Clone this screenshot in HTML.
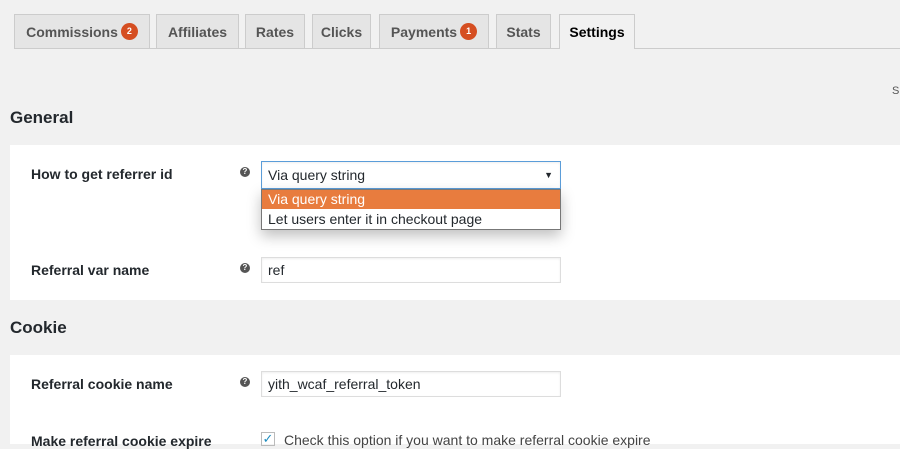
<!DOCTYPE html>
<html><head><style>
body{margin:0;width:900px;height:444px;overflow:hidden;background:#f1f1f1;font-family:"Liberation Sans",sans-serif;color:#23282d;position:relative}
.a{position:absolute}
.tab{position:absolute;top:14px;height:34px;background:#e5e5e5;border:1px solid #ccc;border-bottom:none;box-sizing:border-box;font-size:14px;font-weight:bold;color:#555;line-height:34px;text-align:center}
.badge{display:inline-block;width:17px;height:17px;border-radius:50%;background:#d54e21;color:#fff;font-size:9px;line-height:17px;vertical-align:middle;margin-left:3px;margin-top:-3px}
.panel{position:absolute;left:10px;width:890px;background:#fff}
.lbl{position:absolute;left:31px;font-size:14px;font-weight:bold;color:#23282d}
.h{position:absolute;left:10px;font-size:17px;font-weight:bold;color:#23282d}
.q{position:absolute;left:240px;width:10px;height:10px;border-radius:50%;background:#555;color:#fff;font-size:8px;font-weight:bold;line-height:10px;text-align:center}
.inp{position:absolute;left:261px;width:300px;height:26px;border:1px solid #ddd;box-sizing:border-box;font-size:14px;line-height:24px;padding-left:6px;box-shadow:inset 0 1px 2px rgba(0,0,0,.07);background:#fff}
</style></head><body>
<div class="a" style="left:14px;top:48px;width:886px;height:1px;background:#ccc"></div>
<div class="tab" style="left:14px;width:136px">Commissions<span class="badge">2</span></div>
<div class="tab" style="left:156px;width:83px">Affiliates</div>
<div class="tab" style="left:245px;width:60px">Rates</div>
<div class="tab" style="left:312px;width:59px">Clicks</div>
<div class="tab" style="left:379px;width:110px">Payments<span class="badge">1</span></div>
<div class="tab" style="left:496px;width:55px">Stats</div>
<div class="tab" style="left:559px;width:76px;height:35px;background:#f1f1f1;color:#000">Settings</div>
<div class="a" style="left:892px;top:85px;font-size:11px;color:#555">S</div>
<div class="h" style="top:108px">General</div>
<div class="panel" style="top:145px;height:155px"></div>
<div class="lbl" style="top:166px">How to get referrer id</div>
<div class="q" style="top:167px">?</div>
<div class="inp" style="top:161px;height:28px;border-color:#5b9dd9;line-height:26px">Via query string<span style="position:absolute;right:7px;font-size:9px">▼</span></div>
<div class="a" style="left:261px;top:189px;width:300px;height:41px;border:1px solid #777;box-sizing:border-box;background:#fff;box-shadow:0 6px 14px rgba(0,0,0,.25);font-size:14px">
<div style="background:#e87c3e;color:#fff;height:19px;line-height:19px;padding-left:6px">Via query string</div>
<div style="height:20px;line-height:20px;padding-left:6px">Let users enter it in checkout page</div></div>
<div class="lbl" style="top:262px">Referral var name</div>
<div class="q" style="top:263px">?</div>
<div class="inp" style="top:257px">ref</div>
<div class="h" style="top:318px">Cookie</div>
<div class="panel" style="top:355px;height:89px"></div>
<div class="lbl" style="top:376px">Referral cookie name</div>
<div class="q" style="top:377px">?</div>
<div class="inp" style="top:371px">yith_wcaf_referral_token</div>
<div class="lbl" style="top:433px">Make referral cookie expire</div>
<div class="a" style="left:261px;top:432px;width:14px;height:14px;border:1px solid #bbb;box-sizing:border-box;color:#1e8cbe;font-size:13px;line-height:12px;text-align:center">✓</div>
<div class="a" style="left:284px;top:432px;font-size:14px;color:#444">Check this option if you want to make referral cookie expire</div>
</body></html>
